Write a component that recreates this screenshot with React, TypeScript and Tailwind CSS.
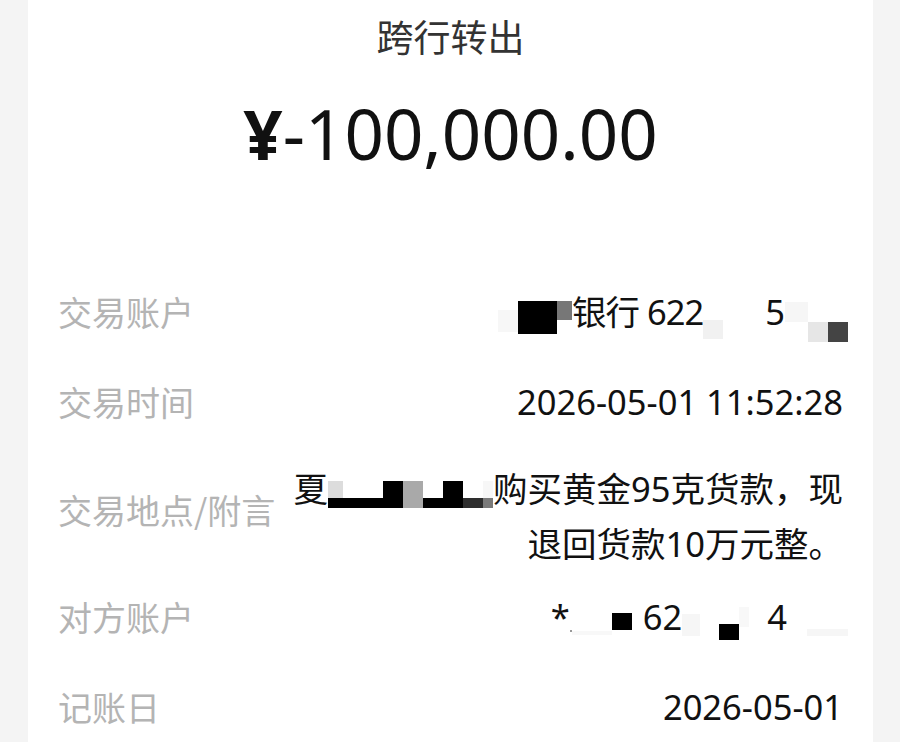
import React from 'react';

const num = "font-['Noto_Sans','Noto_Sans_CJK_SC',sans-serif]";
const cjk = "font-['Noto_Sans_CJK_SC','Noto_Sans',sans-serif]";

// one pixel of the mosaic that hides part of a value
function Px({ w, h, mt, c, className = '' }: { w: number; h: number; mt: number; c: string; className?: string }) {
  return <span className={'shrink-0 ' + className} style={{ width: w, height: h, marginTop: mt, backgroundColor: c }} />;
}

function Gap({ w }: { w: number }) {
  return <span className="shrink-0" style={{ width: w }} />;
}

function Label({ children, className = '' }: { children: React.ReactNode; className?: string }) {
  return <div className={`${cjk} text-[34px] leading-[55px] text-[#b4b4b4] whitespace-nowrap ${className}`}>{children}</div>;
}

export default function App() {
  // mosaic columns over the sender name: [width, top colour, bottom colour]
  const cols: [number, string, string][] = [
    [15, '#dcdcdc', '#000'],
    [20, '#fff', '#000'],
    [20, '#fff', '#000'],
    [20, '#000', '#000'],
    [20, '#a9a9a9', '#a9a9a9'],
    [20, '#fff', '#000'],
    [20, '#000', '#000'],
    [20, '#fff', '#2e2e2e'],
    [10, '#f7f7f7', '#7a7a7a'],
  ];

  return (
    <div className="w-[900px] h-[742px] bg-[#f4f4f4] pl-[28px] pr-[27px] overflow-hidden">
      <div className="h-full bg-white px-[30px]">
        <div className={`${cjk} text-center text-[37px] leading-[50px] text-[#333] pt-[11px]`}>跨行转出</div>
        <div className={`${num} text-center text-[69px] leading-[71px] text-[#111] mt-[37px]`}>
          <span className="font-bold">¥</span>-100,000.00
        </div>

        <div className="mt-[97px]">
          {/* 交易账户 */}
          <div className="h-[90px] flex items-center justify-between">
            <Label>交易账户</Label>
            <div className={`${num} flex items-start h-[55px] text-[34.5px] leading-[55px] text-[#111] mr-[-5px]`}>
              <Px w={20} h={22} mt={26} c="#f7f7f7" />
              <Px w={39} h={33} mt={17} c="#000" />
              <Px w={15} h={19} mt={17} c="#777" />
              <span className="whitespace-nowrap tracking-[-1px]">银行 622</span>
              <Px w={20} h={19} mt={36} c="#f1f1f1" />
              <Gap w={42} />
              <span>5</span>
              <Px w={23} h={20} mt={18} c="#f6f6f6" />
              <Px w={20} h={20} mt={38} c="#e6e6e6" />
              <Px w={20} h={20} mt={38} c="#444" />
            </div>
          </div>

          {/* 交易时间 */}
          <div className="h-[90px] flex items-center justify-between">
            <Label>交易时间</Label>
            <div className={`${num} text-[34.5px] leading-[55px] text-[#111]`}>2026-05-01 11:52:28</div>
          </div>

          {/* 交易地点/附言 */}
          <div className="h-[125px] flex items-start justify-between pt-[15px]">
            <Label className="mt-[21px]">交易地点/附言</Label>
            <div className={`${num} text-[34.5px] leading-[55px] text-[#111]`}>
              <div className="flex items-start justify-end h-[55px]">
                <span>夏</span>
                <div className="flex mt-[19.5px]">
                  {cols.map(([w, top, bottom], i) => (
                    <div key={i} className="flex flex-col" style={{ width: w }}>
                      <span className="h-[17px]" style={{ backgroundColor: top }} />
                      <span className="h-[10px]" style={{ backgroundColor: bottom }} />
                    </div>
                  ))}
                </div>
                <span className="whitespace-nowrap">购买黄金95克货款，现</span>
              </div>
              <div className="text-right whitespace-nowrap">退回货款10万元整。</div>
            </div>
          </div>

          {/* 对方账户 */}
          <div className="h-[90px] flex items-center justify-between">
            <Label>对方账户</Label>
            <div className={`${num} flex items-start h-[55px] text-[34.5px] leading-[55px] text-[#111] mr-[-5px]`}>
              <span>*</span>
              <Px w={2} h={2} mt={41} c="#999" />
              <Px w={40} h={4} mt={42} c="#f8f8f8" />
              <Px w={20} h={17} mt={24} c="#000" />
              <Gap w={11} />
              <span>62</span>
              <Px w={18} h={22} mt={25} c="#f6f6f6" />
              <Gap w={19} />
              <Px w={20} h={16} mt={35} c="#000" />
              <Px w={10} h={20} mt={18} c="#f8f8f8" />
              <Gap w={18} />
              <span>4</span>
              <Gap w={20} />
              <Px w={41} h={7} mt={40} c="#f6f6f6" />
            </div>
          </div>

          {/* 记账日 */}
          <div className="h-[90px] flex items-center justify-between">
            <Label>记账日</Label>
            <div className={`${num} text-[34.5px] leading-[55px] text-[#111]`}>2026-05-01</div>
          </div>
        </div>
      </div>
    </div>
  );
}
